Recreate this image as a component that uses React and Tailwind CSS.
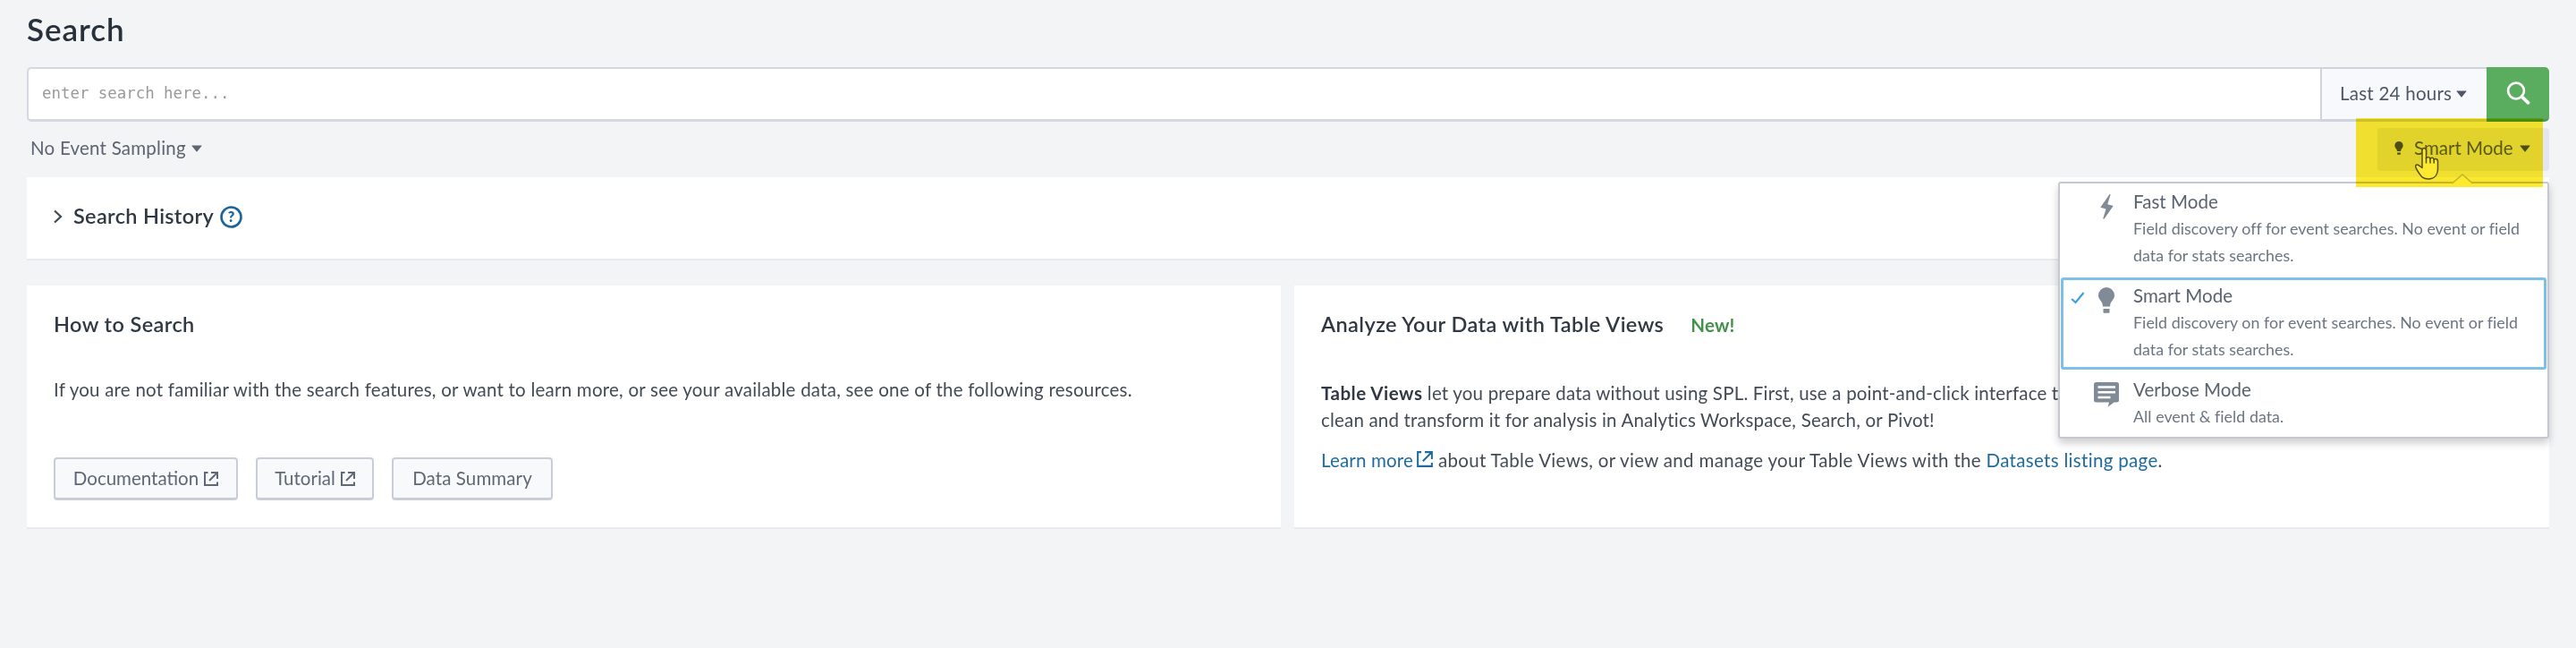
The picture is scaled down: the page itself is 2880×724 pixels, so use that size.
const body = "text-[20.5px] leading-[30px]";

function Caret({ className = "" }) {
  return (
    <svg className={className} width="12" height="8" viewBox="0 0 12 8" fill="currentColor">
      <path d="M1 0.5h10q0.8 0 0.3 0.7L6.5 7.3q-0.5 0.5-1 0L0.7 1.2Q0.2 0.5 1 0.5z" />
    </svg>
  );
}

function External({ className = "", size = 16, weight = 2 }) {
  return (
    <svg className={className} width={size} height={size} viewBox="0 0 16 16" fill="none" stroke="currentColor" strokeWidth={weight}>
      <path d="M4.5 1H1v14h14v-3.5" />
      <path d="M8 1h7v7M14.6 1.4L6 10" />
    </svg>
  );
}

function Bulb({ className = "" }) {
  return (
    <svg className={className} viewBox="0 0 18 29" fill="currentColor">
      <path d="M9 0a9 9 0 0 1 9 9c0 4-3.200 6-4.600 9.500L13 21.500H5l-.4-3C3.200 15 0 13 0 9a9 9 0 0 1 9-9z" />
      <path d="M5.500 24h7v3.500q0 1.200-1.200 1.200H6.700q-1.200 0-1.200-1.200z" />
    </svg>
  );
}

function Bolt() {
  return (
    <svg className="h-7 w-[15px]" viewBox="0 0 15 28" fill="currentColor">
      <path d="M10.500 0L0.300 14.800l6.200 1.700L3.200 27.300l1.200.4L14.700 13 8.300 11.200 11.600.3z" />
    </svg>
  );
}

function Comment() {
  return (
    <svg className="h-7 w-7" viewBox="0 0 28 28">
      <path d="M2.500 0h23Q28 0 28 2.500v17.500q0 2.500-2.500 2.500H22.500L15.500 27.800l1.500-5.300H2.500Q0 22.500 0 20V2.500Q0 0 2.500 0z" fill="currentColor" />
      <path d="M4.500 5.500h19.500M4.500 11.300h19.500M4.500 17h14" stroke="#fff" strokeWidth="2.600" />
    </svg>
  );
}

function Pointer() {
  return (
    <svg className="absolute left-[41px] top-[21px] z-20" width="28" height="38" viewBox="0 0 28 38">
      <path
        d="M9 23.500V4.200Q9 1.500 11.200 1.500T13.500 4.200V13q.4-1.500 2.200-1.500T18 13.500q.5-1.300 2.200-1.200 1.700.1 2 2 .6-.9 2-.8 2.300.2 2.300 3V24c0 7.500-4 12-10.500 12C9.500 36 7.500 32.500 5.500 29.500 4 27.300 2.500 25 1.700 22.500c-.6-2.200 1.600-3.300 3.300-1.800z"
        fill="#fff"
        stroke="#555"
        strokeWidth="1.500"
        strokeLinejoin="round"
      />
      <path d="M13.500 12v6.500M18 13v5.500M22.200 14v4.500" stroke="#555" strokeWidth="1.500" />
    </svg>
  );
}

const modes = [
  { title: "Fast Mode", text: "Field discovery off for event searches. No event or field data for stats searches.", icon: <Bolt />, pad: "pt-[7px]" },
  { title: "Smart Mode", text: "Field discovery on for event searches. No event or field data for stats searches.", icon: <Bulb className="h-[29px] w-[18px]" />, pad: "pt-1.5", selected: true },
  { title: "Verbose Mode", text: "All event & field data.", icon: <Comment />, pad: "pt-[7px]" },
];

function ModeMenu() {
  return (
    <div className="absolute right-0 top-[60px] z-10 w-[549px] rounded-[3px] border-2 border-[#c5c8d2] bg-white shadow-[0_5px_10px_rgba(0,0,0,0.2)]">
      <svg className="absolute right-[83px] top-[-11px]" width="24" height="13" viewBox="0 0 24 13">
        <path d="M0 11.500L12 1l12 10.500V13H0z" fill="#fff" />
        <path d="M0 10.500h1L12 1l11 9.500h1" fill="none" stroke="#c5c8d2" strokeWidth="1.600" />
      </svg>
      {modes.map((m) => (
        <div key={m.title} className="relative flex pt-[5px] pb-[10px] last:pb-2">
          {m.selected && <div className="absolute inset-x-px top-0 bottom-0.5 rounded-[3px] border-[3px] border-[#7dc1ea]" />}
          <div className="flex w-[31px] shrink-0 justify-end pt-[11px]">
            {m.selected && (
              <svg className="mr-[3px]" width="16" height="14" viewBox="0 0 16 14" fill="none" stroke="#3f9fdc" strokeWidth="2.200">
                <path d="M1.200 8l4.300 4L14.600 1" />
              </svg>
            )}
          </div>
          <div className={`flex w-[42px] shrink-0 justify-center text-[#818b98] ${m.pad}`}>{m.icon}</div>
          <div className="w-[455px] pl-[9px]">
            <div className={`${body} tracking-[0.050px] text-[#5a626f]`}>{m.title}</div>
            <div className="text-[17.800px] leading-[30px] tracking-[0.050px] text-[#6b7582]">{m.text}</div>
          </div>
        </div>
      ))}
    </div>
  );
}

function Button({ children, className }) {
  return (
    <button className={`flex h-12 items-center justify-center rounded-[4px] border-2 border-b-[3px] border-[#c9cdd8] bg-[#f7f9fb] text-[20.500px] text-[#5f6875] ${className}`}>
      {children}
    </button>
  );
}

export default function App() {
  return (
    <div className="h-[724px] w-[2880px] overflow-hidden bg-[#f2f4f6] px-[30px] pt-[9px] font-[Lato,sans-serif]">
      <h1 className="text-[35px] leading-[46px] font-semibold tracking-[0.950px] text-[#27303b]">Search</h1>

      <div className="mt-5 flex h-[61px]">
        <div className="flex-1 rounded-l-[5px] border-2 border-r-0 border-b-[3px] border-[#d5d8e0] bg-white pt-[13px] pl-[15px] font-['DejaVu_Sans_Mono',monospace] text-[17.400px] leading-7 text-[#999]">
          enter search here...
        </div>
        <div className="flex w-[186px] items-center border-2 border-r-0 border-b-[3px] border-[#cfd3dd] bg-[#f7f9fc] pb-px pl-5 text-[20.500px] tracking-[0.250px] text-[#4f5765]">
          Last 24 hours
          <Caret className="ml-[5px]" />
        </div>
        <button className="flex w-[70px] items-center justify-center rounded-r-[5px] border-b-[3px] border-[#4b9650] bg-[#5aad5f] text-white">
          <svg width="27" height="27" viewBox="0 0 27 27" fill="none" stroke="currentColor">
            <circle cx="11" cy="10.500" r="8.900" strokeWidth="2.600" />
            <path d="M17.500 17l7 6.800" strokeWidth="3.800" strokeLinecap="round" />
          </svg>
        </button>
      </div>

      <div className="mt-[7px] flex h-12 justify-between">
        <div className="flex items-center pb-[3px] pl-1 text-[20.500px] tracking-[0.230px] text-[#5c6570]">
          No Event Sampling
          <Caret className="ml-1.5" />
        </div>
        <div className="relative w-[192px]">
          <div className="flex h-12 items-center rounded-[4px] bg-[#e3e6ee] pb-[3px] pl-[19px] text-[20.500px] text-[#5a6270]">
            <Bulb className="h-[15px] w-[10px] text-[#4d5563]" />
            <span className="ml-3">Smart Mode</span>
            <Caret className="ml-[7px] text-[#4d5563]" />
          </div>
          <ModeMenu />
          <Pointer />
          <div className="absolute -top-[11px] -left-6 z-30 h-[77px] w-[209px] bg-[#fde92f] mix-blend-multiply" />
        </div>
      </div>

      <div className="mt-[7px] flex h-[91px] items-center bg-white pb-[3px] pl-[30px] shadow-[0_2px_0_#e8eaf0]">
        <svg width="10" height="16" viewBox="0 0 10 16" fill="none" stroke="#3f4854" strokeWidth="2.200">
          <path d="M1 1.500L8 8l-7 6.500" />
        </svg>
        <h2 className="ml-3 text-[23.500px] font-semibold tracking-[0.330px] text-[#2f3843]">Search History</h2>
        <svg className="ml-[7px]" width="25" height="25" viewBox="0 0 25 25">
          <circle cx="12.500" cy="12.500" r="11" fill="none" stroke="#1c6499" strokeWidth="2.600" />
          <text x="12.500" y="18" textAnchor="middle" fontFamily="Lato" fontSize="16" fontWeight="800" fill="#1c6499">?</text>
        </svg>
      </div>

      <div className="mt-[30px] flex h-[270px] gap-[15px] text-[#434b56]">
        <section className="w-[1402px] bg-white px-[30px] pt-7 shadow-[0_2px_0_#e8eaf0]">
          <h2 className="text-[23.500px] leading-[30px] font-semibold tracking-[0.400px] text-[#2f3843]">How to Search</h2>
          <p className={`mt-[43px] ${body} tracking-[0.230px]`}>
            If you are not familiar with the search features, or want to learn more, or see your available data, see one of the following resources.
          </p>
          <div className="mt-[61px] flex">
            <Button className="w-[206px]">Documentation<External className="ml-1.5" /></Button>
            <Button className="ml-5 w-[132px]">Tutorial<External className="ml-1.5" /></Button>
            <Button className="ml-5 w-[180px] tracking-[0.100px]">Data Summary</Button>
          </div>
        </section>
        <section className="flex-1 bg-white pt-7 pl-[30px] shadow-[0_2px_0_#e8eaf0]">
          <div className="flex items-baseline gap-[30px] leading-[30px]">
            <h2 className="text-[23.500px] font-semibold tracking-[0.420px] text-[#2f3843]">Analyze Your Data with Table Views</h2>
            <span className="text-[20.500px] font-bold tracking-[0.200px] text-[#43904a]">New!</span>
          </div>
          <p className={`mt-[46px] ${body} tracking-[0.190px]`}>
            <b className="tracking-[0.500px] text-[#2f3843]">Table Views</b> let you prepare data without using SPL. First, use a point-and-click interface to
            <br />
            clean and transform it for analysis in Analytics Workspace, Search, or Pivot!
          </p>
          <p className={`mt-[15px] ${body} tracking-[0.320px]`}>
            <a className="tracking-[0.170px] text-[#1f6b9f]">
              Learn more
              <External className="mr-1.5 ml-1 inline-block align-[0px]" size={18} weight={1.8} />
            </a>
            about Table Views, or view and manage your Table Views with the <a className="text-[#1f6b9f]">Datasets listing page</a>.
          </p>
        </section>
      </div>
    </div>
  );
}
